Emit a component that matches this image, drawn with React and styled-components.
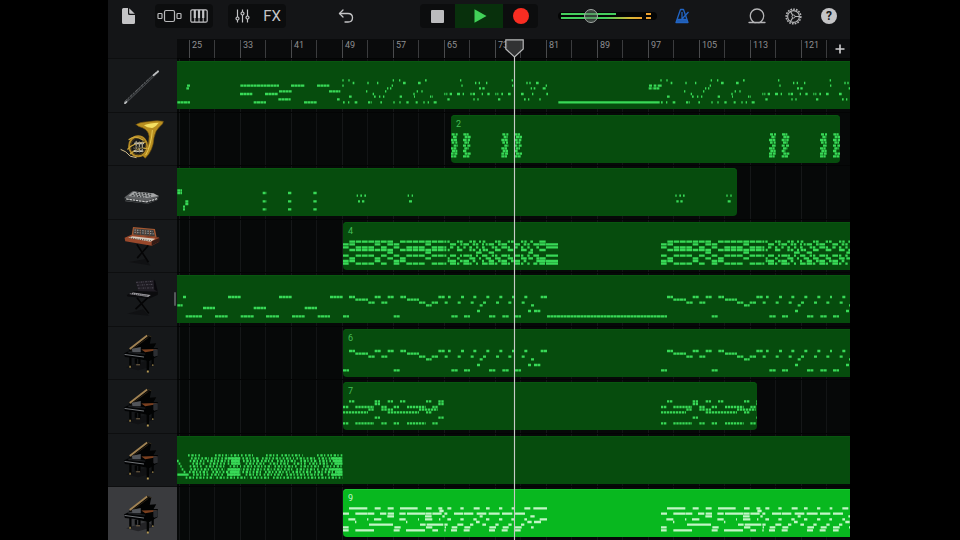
import styled, { createGlobalStyle, css } from 'styled-components'
import { useState } from 'react'


const GlobalStyle = createGlobalStyle`
    * {
        box-sizing: border-box;
    }

    body {
        margin: 0;
        background-color: #000;
        font-family: Roboto, 'Liberation Sans', sans-serif;
    }

    button {
        border: 0;
        margin: 0;
        padding: 0;
        background: none;
        color: inherit;
        font: inherit;
        cursor: pointer;
    }

    svg {
        display: block;
    }
`

const Screen = styled.div`
    display: flex;
    flex-direction: column;
    min-height: 100vh;
    margin: 0 110px 0 108px;
    background-color: #141517;
    color: #c4c4c6;
`

const Toolbar = styled.header`
    display: grid;
    grid-template-columns: 1fr auto 1fr;
    align-items: center;
    height: 39px;
    padding-bottom: 7px;
`

const ToolbarLeft = styled.div`
    display: flex;
    align-items: center;
    gap: 15px;
    padding: 0 66px 0 13px;

    > :first-child {
        margin-right: 4px;
    }

    > :last-child {
        margin-left: auto;
    }
`

const ToolbarRight = styled.div`
    display: flex;
    align-items: center;
    gap: 18px;
    padding: 0 13px 0 20px;
`

const RightButtons = styled.div`
    display: flex;
    gap: 19px;
    margin-left: auto;
`

const IconButton = styled.button`
    display: grid;
    place-items: center;
    height: 24px;
`

const ButtonGroup = styled.div`
    display: flex;
    height: 24px;
    border-radius: 4px;
    background-color: #0c0d0e;
    overflow: hidden;
`

const GroupButton = styled.button`
    display: grid;
    place-items: center;
    width: ${props => props.$wide ? '48px' : props.$medium ? '35px' : '29px'};
    background-color: ${props => props.$playing ? '#08300c' : 'transparent'};
    font-size: 15px;
    line-height: 24px;

    & + & {
        border-left: 1px solid ${props => props.$medium || props.$wide ? 'transparent' : '#17181a'};
    }
`

const VolumeBox = styled.div`
    display: grid;
    width: 99px;
    height: 16px;

    > * {
        grid-area: 1 / 1;
    }
`

const VolumeSlider = styled.input`
    appearance: none;
    width: 100%;
    height: 16px;
    margin: 0;
    background: transparent;

    &::-webkit-slider-thumb {
        appearance: none;
        width: 14px;
        height: 14px;
        border: 1px solid #a2a8a4;
        border-radius: 50%;
        background-color: rgba(100, 120, 105, 0.5);
    }
`

const HelpMark = styled.span`
    width: 16px;
    height: 16px;
    border-radius: 50%;
    background-color: #c4c4c6;
    color: #17181a;
    font-size: 12px;
    font-weight: 700;
    line-height: 16px;
    text-align: center;
`

const Ruler = styled.div`
    display: flex;
    height: 19px;
    margin-left: 69px;
    background-color: #0a0b0c;
`

const Bars = styled.div`
    flex: 1;
    display: flex;
    width: 0;
    padding-left: 12px;
    overflow: hidden;
`

const Bar = styled.div`
    flex: 0 0 51px;
    height: 18px;
    margin-top: 1px;
    padding-left: 3px;
    font-size: 9px;
    line-height: 10px;
    color: #8e8f91;
    background: linear-gradient(#4a4b4d, #4a4b4d) 0 0 / 1px 100% no-repeat,
        linear-gradient(#3b3c3e, #3b3c3e) 25px 0 / 1px 100% no-repeat;
`

const AddButton = styled.button`
    display: grid;
    place-items: center;
    width: 21px;
    background-color: #0c0d0f;
`

const Tracks = styled.main`
    position: relative;
    flex: 1;
    display: grid;
    grid-template-rows: repeat(9, minmax(53px, 1fr));
`

const TrackRow = styled.div`
    display: flex;
`

const TrackHeader = styled.button`
    flex: 0 0 69px;
    display: grid;
    align-items: center;
    border-top: 1px solid #0d0e0f;
    background-color: ${props => props.$selected ? '#3a3b3e' : '#16181a'};

    svg {
        width: 69px;
        height: 52px;
    }
`

const Lane = styled.div`
    flex: 1;
    display: flex;
    width: 0;
    padding-top: 2px;
    overflow: hidden;
    border-top: 1px solid #030404;
    background: repeating-linear-gradient(90deg, #151718 0 1px, transparent 1px 25px, #121415 25px 26px, transparent 26px 51px) 12px 0,
        #060808;
`

const Region = styled.div`
    display: grid;
    flex: 0 0 auto;
    width: ${props => props.$width}px;
    height: 48px;
    margin-left: ${props => props.$start}px;
    border-radius: ${props => props.$start > 0 ? '4px' : 0} ${props => props.$open ? 0 : '4px'} ${props => props.$open ? 0 : '4px'} ${props => props.$start > 0 ? '4px' : 0};
    overflow: hidden;
    background-color: #064c0d;
    box-shadow: inset 0 1px #08560f;
    color: #46bd57;

    ${props => props.$selected && css`
        background-color: #08b81f;
        box-shadow: inset 0 1px #1cc534;
        color: #c4f5c9;
    `}

    > * {
        grid-area: 1 / 1;
    }
`

const RegionName = styled.span`
    padding: 4px 5px;
    font-size: 9px;
    line-height: 10px;
`

const Playhead = styled.div`
    position: absolute;
    top: -19px;
    bottom: 0;
    left: 397px;
    width: 19px;
    pointer-events: none;

    &::after {
        content: '';
        position: absolute;
        top: 18px;
        bottom: 0;
        left: 9px;
        width: 1px;
        background-color: #c6cac6;
        box-shadow: 0 0 1px #8f9990;
    }
`

const ResizeHandle = styled.div`
    position: absolute;
    top: 234px;
    left: 66px;
    width: 2px;
    height: 14px;
    border-radius: 1px;
    background-color: #55575a;
`


// Notes are kept as { height in the region: [start, length, start, length...] },
// in thirds of a pixel from the left edge of the timeline.
const SECOND_VERSE = 954
const VERSE = 498

const move = (notes, offset) => Object.fromEntries(
    Object.entries(notes).map(([y, list]) => [y, list.map((n, i) => i % 2 === 0 ? n + offset : n)])
)

const twice = (notes) => [move(notes, VERSE), move(notes, VERSE + SECOND_VERSE)]

const bassoonIntro = {
    74: [30, 9, 190, 116, 342, 41, 420, 37, 1416, 10, 1430, 8, 1442, 12],
    82: [28, 8, 1415, 11, 1429, 18],
    91: [306, 38, 456, 34],
    99: [189, 37, 264, 38],
    115: [304, 37, 480, 8],
    124: [1, 38, 230, 37, 381, 38],
}

const bassoonVerse = {
    58: [-2, 4, 16, 4, 149, 4, 168, 4, 246, 5, 351, 4, 506, 4],
    66: [29, 5, 73, 4, 102, 4, 180, 8, 225, 8, 396, 4, 407, 4, 429, 4, 550, 4, 559, 4, 579, 8],
    74: [-2, 4, 146, 4, 355, 4, 507, 4, 608, 4],
    82: [132, 4, 141, 4, 408, 6, 418, 7, 563, 4, 572, 5, 599, 9],
    91: [69, 4, 126, 4, 221, 4, 235, 4],
    99: [89, 4, 211, 4, 304, 3, 310, 3, 320, 7, 342, 9, 359, 4, 382, 4, 389, 7, 416, 4, 433, 7, 457, 3, 463, 3, 475, 5, 495, 8, 534, 8, 567, 4, 610, 5],
    107: [18, 8, 93, 5, 108, 4, 120, 4, 170, 7, 213, 3, 261, 3, 266, 3],
    115: [313, 7, 391, 4, 403, 4, 465, 7, 543, 5, 555, 4, 589, 4],
    124: [0, 5, 15, 4, 35, 8, 75, 6, 83, 3, 112, 5, 151, 4, 169, 4, 190, 7, 218, 6, 241, 4, 254, 4, 272, 10],
}

const hornA = { 58: [3, 10, 15, 6], 66: [7, 12], 75: [0, 20], 83: [3, 8, 14, 6], 92: [9, 12], 100: [0, 17], 108: [4, 16], 116: [0, 9, 11, 9], 124: [0, 17] }
const hornB = { 58: [1, 16], 66: [5, 18], 75: [0, 12, 14, 7], 83: [4, 14], 92: [0, 9, 13, 9], 100: [4, 13], 108: [0, 11], 116: [5, 18], 124: [0, 20] }

const padNotes = {
    67: [1, 14],
    75: [1, 14, 257, 11, 333, 11, 409, 11],
    83: [539, 4, 550, 5, 562, 5, 692, 4, 704, 4, 1495, 4, 1507, 5, 1518, 5, 1648, 4, 1660, 4],
    100: [25, 10, 257, 11, 333, 11, 409, 11, 543, 6, 555, 7, 696, 10, 1498, 7, 1510, 7, 1652, 10],
    108: [25, 9],
    116: [18, 6],
    124: [18, 6, 257, 11, 333, 11, 409, 11],
}

// the slow half of the chords plays whole bars, the fast half shorter steps
const chordBars = {
    59: [1, 2, 3, 4, 5, 6, 7, 9, 10, 11, 12, 13, 14, 15],
    67: [0, 1, 5, 7, 8, 13],
    76: [0, 2, 3, 4, 6, 8, 10, 11, 12, 14, 15],
    84: [1, 2, 3, 4, 5, 6, 7, 9, 10, 11, 12, 13, 14, 15],
    92: [7, 13],
    101: [0, 2, 3, 4, 6, 8, 10, 11, 12, 14, 15],
    109: [1, 5, 7, 9, 13],
    117: [0, 1, 5, 8, 9],
    125: [0, 2, 3, 4, 6, 8, 10, 11, 12, 14, 15],
}

const chordFast = {
    59: [133, 6, 142, 7, 171, 7, 180, 8, 208, 8, 219, 8, 237, 6, 248, 8, 285, 7, 294, 8, 323, 7, 333, 8, 363, 7, 373, 7, 391, 8, 418, 19],
    67: [150, 18, 181, 6, 190, 17, 218, 8, 228, 7, 246, 6, 257, 6, 266, 16, 294, 8, 304, 17, 343, 17, 371, 8, 382, 7, 400, 17, 418, 19, 438, 36],
    76: [133, 6, 150, 10, 171, 7, 190, 7, 208, 8, 228, 7, 246, 8, 275, 8, 285, 7, 304, 17, 323, 7, 343, 10, 363, 7, 382, 7, 409, 8, 438, 36],
    84: [133, 6, 143, 6, 171, 16, 208, 7, 218, 8, 237, 6, 248, 8, 257, 7, 285, 17, 323, 17, 363, 17, 391, 8, 418, 19],
    92: [228, 17, 266, 16, 385, 14],
    101: [133, 6, 150, 18, 180, 6, 190, 17, 208, 8, 228, 6, 246, 16, 275, 7, 285, 7, 304, 17, 323, 7, 343, 17, 363, 7, 382, 7, 400, 17, 438, 36],
    109: [143, 6, 171, 8, 208, 18, 237, 6, 257, 16, 285, 17, 323, 16, 363, 17, 385, 14, 409, 8, 418, 19],
    117: [143, 6, 150, 18, 180, 8, 190, 17, 218, 8, 246, 6, 266, 16, 294, 8, 304, 17, 333, 8, 343, 17, 371, 8, 409, 28, 438, 36],
    125: [133, 6, 150, 18, 171, 7, 190, 17, 208, 7, 228, 6, 246, 17, 266, 17, 285, 7, 304, 17, 323, 7, 343, 17, 363, 7, 382, 7, 400, 12, 418, 17, 438, 36],
}

const chordSlow = Object.fromEntries(
    Object.entries(chordBars).map(([y, bars]) => [y, bars.flatMap(bar => [bar * 19, 17])])
)

const leadIntro = {
    66: [18, 10, 153, 38, 306, 38, 459, 38],
    91: [1, 16],
    99: [78, 36, 230, 37, 383, 37],
    124: [26, 50, 114, 38, 191, 40, 267, 39, 345, 38, 422, 37, 1110, 345],
}

const leadVerse = {
    66: [18, 18, 95, 18, 134, 18, 172, 17, 286, 19, 315, 8, 354, 9, 391, 9, 430, 9, 469, 9, 507, 6, 544, 10, 593, 19],
    74: [37, 38, 192, 36],
    83: [76, 19, 115, 18, 228, 19, 266, 20, 305, 10, 344, 9, 383, 9, 420, 9, 459, 9, 496, 10, 536, 9],
    91: [249, 17, 410, 9, 564, 9],
    108: [402, 9, 555, 9, 573, 19],
    124: [0, 18, 152, 18, 325, 19, 363, 18, 438, 19, 478, 19, 516, 18],
}

const pianoVerse = {
    58: [18, 17, 95, 17, 134, 17, 171, 17, 249, 17, 286, 16],
    66: [95, 17, 286, 16],
    75: [0, 17, 37, 56, 115, 16, 152, 17, 192, 56, 268, 16],
    83: [76, 17, 115, 17, 134, 17, 228, 56],
    91: [0, 75, 134, 94, 249, 17],
    107: [95, 18, 286, 16],
    124: [0, 17, 37, 56, 115, 16, 152, 17, 192, 56, 268, 17],
}

const arpeggio = {
    58: [33, 38, 114, 42, 161, 36, 204, 24, 267, 36, 313, 64, 420, 36, 460, 37],
    67: [42, 54, 102, 90, 196, 52, 255, 96, 358, 60, 424, 72],
    75: [0, 5, 38, 44, 90, 100, 198, 50, 252, 40, 300, 60, 370, 50, 426, 70],
    83: [5, 5, 46, 36, 98, 46, 152, 40, 206, 60, 278, 60, 350, 36, 396, 56, 462, 34],
    91: [10, 4, 38, 40, 86, 62, 158, 34, 200, 84, 292, 70, 370, 60, 438, 58],
    100: [14, 5, 40, 104, 152, 42, 198, 86, 290, 62, 358, 70, 434, 62],
    108: [20, 5, 36, 60, 106, 84, 196, 60, 264, 74, 346, 60, 412, 84],
    116: [48, 46, 102, 36, 150, 42, 206, 46, 260, 60, 328, 56, 390, 48, 452, 44],
    125: [26, 84, 118, 94, 220, 58, 288, 98, 392, 104],
}

const arpeggioStabs = {
    67: [152, 38, 462, 34],
    75: [164, 24, 474, 22],
    83: [166, 24, 474, 22],
    100: [152, 38, 458, 38],
    108: [160, 28, 478, 18],
    116: [1, 34, 150, 40, 466, 30],
}

const grandVerse = {
    58: [18, 55, 95, 18, 134, 18, 171, 53, 249, 17, 286, 12, 313, 12, 352, 10, 392, 18, 429, 11, 468, 10, 506, 8, 544, 18, 571, 41],
    66: [289, 13],
    74: [0, 18, 37, 37, 75, 19, 111, 19, 134, 19, 169, 19, 192, 56, 249, 17, 268, 28, 304, 9, 333, 28, 363, 28, 401, 29, 437, 33, 477, 31, 516, 30],
    82: [133, 20, 246, 20, 298, 7, 410, 9, 562, 13],
    91: [16, 21, 72, 4, 93, 22, 169, 19, 225, 3, 246, 22, 288, 4, 313, 11, 352, 10, 391, 10, 429, 10, 468, 10, 505, 8, 544, 8, 590, 22],
    99: [36, 4, 189, 4, 399, 11, 553, 13, 573, 21],
    107: [78, 72, 231, 17, 251, 50, 304, 10, 343, 18, 381, 10, 418, 11, 457, 10, 496, 10, 534, 10],
    115: [0, 17, 154, 19, 249, 19, 305, 4, 326, 17, 364, 18, 439, 20, 479, 18, 516, 20, 564, 8],
    124: [0, 17, 37, 56, 152, 18, 189, 57, 268, 17, 304, 4, 324, 18, 362, 18, 438, 18, 476, 18, 516, 17],
}

const tracks = [
    {
        id: 1, instrument: 'Bassoon', start: 0, end: 2100,
        notes: [bassoonIntro, ...twice(bassoonVerse)], held: { 124: [1144, 304] },
    },
    {
        id: 2, instrument: 'French Horn', start: 822, end: 1989, label: true,
        notes: [821, 973, 1776, 1929].map(x => move(hornA, x)).concat([858, 1012, 1814, 1968].map(x => move(hornB, x))),
    },
    { id: 3, instrument: 'Pad Synth', start: 0, end: 1680, notes: [padNotes] },
    {
        id: 4, instrument: 'Modular Synth', start: 498, end: 2100, label: true, solid: true,
        notes: [...twice(chordSlow), ...twice(move(chordFast, 171))],
    },
    { id: 5, instrument: 'Lead Synth', start: 0, end: 2100, notes: [leadIntro, ...twice(leadVerse)] },
    { id: 6, instrument: 'Grand Piano', start: 498, end: 2100, label: true, notes: twice(leadVerse) },
    { id: 7, instrument: 'Grand Piano', start: 498, end: 1740, label: true, notes: twice(pianoVerse), dash: '7 2' },
    { id: 8, instrument: 'Grand Piano', start: 0, end: 2100, notes: [arpeggio], dash: '5 5 7 4 4 6', held: arpeggioStabs },
    { id: 9, instrument: 'Grand Piano', start: 498, end: 2100, label: true, solid: true, notes: twice(grandVerse) },
]

const toPath = (notes) => Object.entries(notes).map(([y, list]) => {
    let d = ''
    for (let i = 0; i < list.length; i += 2) {
        d += `M${list[i]} ${y}h${list[i + 1]}`
    }
    return d
}).join('')

const Notes = ({ track, selected }) => {
    const width = track.end - track.start
    const color = selected ? '#c2f5c6' : '#38d957'
    return (
        <svg width={width / 3} height='48' viewBox={`${track.start} 0 ${width} 144`} fill='none' stroke={color} strokeWidth='7'>
            <path d={track.notes.map(toPath).join('')} strokeDasharray={track.solid ? undefined : track.dash || '9 1'} />
            {track.held && <path d={toPath(track.held)} />}
        </svg>
    )
}


const Bassoon = () => (
    <g fill='none' strokeLinecap='round'>
        <path d='M50 136L152 39' stroke='#4a4d50' strokeWidth='6' />
        <path d='M48 132L150 36' stroke='#8d9092' strokeWidth='2' strokeDasharray='9 5 3 6' />
        <path d='M62 124L138 52' stroke='#1b1d1f' strokeWidth='3' strokeDasharray='7 5' />
        <path d='M138 50L152 38M49 137l5-4' stroke='#bfc1c2' strokeWidth='5' />
    </g>
)

const FrenchHorn = () => (
    <g fill='none' strokeLinecap='round'>
        <path d='M84 36Q90 29 120 27Q150 22 168 26Q168 33 158 41Q143 53 139 77Q136 118 112 140L104 132Q124 112 124 72Q122 54 104 46Q90 42 84 36Z' fill='#b98f20' stroke='#7b5a10' strokeWidth='2' />
        <path d='M108 38Q126 31 154 30Q146 41 136 46Q118 47 108 38Z' fill='#f3df62' />
        <path d='M134 54Q131 98 114 129' stroke='#e7c955' strokeWidth='3' />
        <ellipse cx='90' cy='103' rx='28' ry='31' stroke='#b58b25' strokeWidth='6' />
        <ellipse cx='90' cy='103' rx='23' ry='26' stroke='#6e5316' strokeWidth='2' />
        <path d='M62 82Q80 66 106 84M58 112Q74 92 112 90M66 126Q92 104 118 110' stroke='#cda63a' strokeWidth='4' />
        <path d='M80 94h26M78 118h26' stroke='#c7c3b5' strokeWidth='5' />
        <path d='M84 88v32M94 90v30M103 90v28' stroke='#a59c80' strokeWidth='4' />
        <path d='M82 103l22 7M76 108l14 8' stroke='#55523f' strokeWidth='4' />
        <path d='M37 113Q52 117 66 134L84 138' stroke='#d8c391' strokeWidth='3' />
    </g>
)

const PadSynth = () => (
    <g>
        <path d='M48 97L72 78L154 92L150 105L120 117L50 109Z' fill='#5d5f61' />
        <path d='M76 79L138 84L153 93L116 99L60 93Z' fill='#a4a6a7' />
        <path d='M50 99L117 108L153 96V103L118 117L49 107Z' fill='#232628' />
        <path d='M53 102L116 111L149 101' fill='none' stroke='#c9caca' strokeWidth='4' strokeDasharray='8 2' />
        <path d='M77 86l52 8M85 82l48 6M70 91l42 6' stroke='#3c3f41' strokeWidth='4' strokeDasharray='6 4' />
    </g>
)

const ModularSynth = () => (
    <g>
        <path d='M62 130L128 141L112 121Z' fill='#101113' />
        <path d='M86 75L122 131M122 78L87 118' stroke='#050506' strokeWidth='5' />
        <path d='M74 22L142 28L147 53L70 47Z' fill='#a45831' />
        <path d='M77 26L138 31L142 50L75 45Z' fill='#3d3d3d' />
        <path d='M79 31l57 5M79 38l59 5' stroke='#9b9b98' strokeWidth='4' strokeDasharray='4 4' />
        <path d='M84 28v18M97 29v18M111 30v18M125 31v18' stroke='#7b4a31' strokeWidth='2' />
        <path d='M48 55L70 46L155 54V67L132 80L50 66Z' fill='#99482b' />
        <path d='M59 55L72 50L143 58L129 67Z' fill='#d7cabc' />
        <path d='M64 56l65 8' stroke='#544c46' strokeWidth='4' strokeDasharray='3 4' />
        <path d='M132 66l23-10v11l-23 13Z' fill='#351b15' />
    </g>
)

const LeadSynth = () => (
    <g>
        <path d='M56 126L124 132L105 112Z' fill='#101113' />
        <path d='M86 76L123 125M120 76L82 112' stroke='#040405' strokeWidth='5' />
        <path d='M82 26L139 21L151 58L91 59Z' fill='#1f1c23' />
        <path d='M84 29l51-3M87 38l50-3M90 47l50-1' stroke='#6d6975' strokeWidth='2' strokeDasharray='5 3 2 4' />
        <path d='M138 21l5 4 8 33-11-6Z' fill='#0a090d' />
        <path d='M55 68L78 56L151 58V67L125 79L57 73Z' fill='#0b0b0d' />
        <path d='M62 65L74 60L129 68L121 74Z' fill='#a09fa3' />
        <path d='M68 64l53 7' stroke='#38363b' strokeWidth='4' strokeDasharray='3 3' />
    </g>
)

const GrandPiano = () => (
    <g>
        <path d='M53 125L90 134L138 121L119 104Z' fill='#0b0c0d' opacity='.5' />
        <path d='M60 74L118 24L131 29L126 52L146 50L135 70L92 72Z' fill='#020303' />
        <path d='M64 68L118 26' stroke='#a08253' strokeWidth='6' />
        <path d='M68 72L122 32' stroke='#2b2114' strokeWidth='3' />
        <path d='M119 26l12 4' stroke='#51442d' strokeWidth='2' />
        <path d='M74 76L102 66L151 65V90L124 106L78 96Z' fill='#020303' />
        <path d='M100 70L147 68V72L112 78Z' fill='#7a3f1e' />
        <path d='M137 69h14v20l-14 4Z' fill='#2c2e32' />
        <path d='M70 67L98 62V78L73 80Z' fill='#515459' />
        <path d='M46 82L58 76L113 83V99L49 93Z' fill='#020304' />
        <path d='M48 85L108 93' stroke='#75787c' strokeWidth='3' />
        <path d='M60 79L112 84' stroke='#303338' strokeWidth='2' />
        <path d='M66 93v30M120 99v38M135 90v28M83 98v16M94 98v18' stroke='#020303' strokeWidth='7' />
        <path d='M117 138h6M63 123h4M134 118h3' stroke='#b79b55' strokeWidth='6' />
        <path d='M84 117h12' stroke='#7c684b' strokeWidth='3' />
    </g>
)

const pictures = {
    'Bassoon': Bassoon,
    'French Horn': FrenchHorn,
    'Pad Synth': PadSynth,
    'Modular Synth': ModularSynth,
    'Lead Synth': LeadSynth,
    'Grand Piano': GrandPiano,
}

const barNumbers = [25, 33, 41, 49, 57, 65, 73, 81, 89, 97, 105, 113, 121]


const App = () => {

    const [playing, setPlaying] = useState(true)
    const [volume, setVolume] = useState(31)
    const [selected, setSelected] = useState(9)

    return (
        <Screen>
            <GlobalStyle />
            <Toolbar>
                <ToolbarLeft>
                    <IconButton aria-label='My Songs'>
                        <svg width='15' height='18' viewBox='0 0 15 18' fill='#c4c4c6'>
                            <path d='M2.5 1H7v5.5Q7 8 8.5 8H14v7.500q0 1.500-1.500 1.500h-10Q1 17 1 15.500v-13Q1 1 2.500 1Z' />
                            <path d='M8.200 1.200L13.800 6.800H9Q8.200 6.800 8.200 6Z' />
                        </svg>
                    </IconButton>
                    <ButtonGroup>
                        <GroupButton aria-label='Browser'>
                            <svg width='25' height='14' viewBox='0 0 25 14' fill='none' stroke='#b9b9bb' strokeWidth='1.200'>
                                <rect x='1' y='4.500' width='4' height='5' rx='.8' />
                                <rect x='7.500' y='1.500' width='10' height='11' rx='1.500' />
                                <rect x='20' y='4.500' width='4' height='5' rx='.8' />
                            </svg>
                        </GroupButton>
                        <GroupButton aria-label='Instrument'>
                            <svg width='18' height='14' viewBox='0 0 18 14' fill='none' stroke='#c4c4c6' strokeWidth='1.200'>
                                <rect x='.8' y='.8' width='16.400' height='12.400' rx='1.500' />
                                <path d='M4.800 8v5M9 8v5M13.200 8v5' strokeWidth='1' />
                                <path d='M4.800 1v8M9 1v8M13.200 1v8' strokeWidth='2.200' />
                            </svg>
                        </GroupButton>
                    </ButtonGroup>
                    <ButtonGroup>
                        <GroupButton aria-label='Track Controls'>
                            <svg width='15' height='14' viewBox='0 0 15 14' fill='#0c0d0e' stroke='#c4c4c6' strokeWidth='1.200'>
                                <path d='M2.500 .5v13M7.500 .5v13M12.500 .5v13' />
                                <circle cx='2.500' cy='9.500' r='1.500' />
                                <circle cx='7.500' cy='4.500' r='1.500' />
                                <circle cx='12.500' cy='8.500' r='1.500' />
                            </svg>
                        </GroupButton>
                        <GroupButton>FX</GroupButton>
                    </ButtonGroup>
                    <IconButton aria-label='Undo'>
                        <svg width='16' height='14' viewBox='0 0 16 14' fill='none' stroke='#c4c4c6' strokeWidth='1.300' strokeLinecap='round' strokeLinejoin='round'>
                            <path d='M5 1L1.500 4.500L5 8' />
                            <path d='M1.500 4.500H10Q14.500 4.500 14.500 8.700T10 13H7' />
                        </svg>
                    </IconButton>
                </ToolbarLeft>

                <ButtonGroup>
                    <GroupButton $medium aria-label='Stop'>
                        <svg width='13' height='13'><rect width='13' height='13' rx='1' fill='#bcbcbe' /></svg>
                    </GroupButton>
                    <GroupButton $wide $playing={playing} aria-label='Play' onClick={() => setPlaying(!playing)}>
                        <svg width='14' height='14' viewBox='0 0 14 14'><path d='M1.500 .3L13.500 7L1.500 13.700Z' fill='#41d158' /></svg>
                    </GroupButton>
                    <GroupButton $medium aria-label='Record'>
                        <svg width='16' height='16'><circle cx='8' cy='8' r='8' fill='#f92d22' /></svg>
                    </GroupButton>
                </ButtonGroup>

                <ToolbarRight>
                    <VolumeBox>
                        <svg width='99' height='16' viewBox='0 0 99 16'>
                            <defs>
                                <linearGradient id='level' x1='0' x2='1'>
                                    <stop offset='.55' stopColor='#45ce5d' />
                                    <stop offset='.85' stopColor='#d8ba38' />
                                    <stop offset='1' stopColor='#eda130' />
                                </linearGradient>
                            </defs>
                            <rect y='4' width='99' height='8' rx='4' fill='#040505' />
                            <rect x='3' y='5' width='55' height='2' fill='#45ce5d' />
                            <rect x='3' y='9' width='81' height='2' fill='url(#level)' />
                            <path d='M88 6h5M88 10h5' stroke='#eda130' strokeWidth='2' />
                        </svg>
                        <VolumeSlider
                            type='range'
                            aria-label='Master Volume'
                            value={volume}
                            onChange={(e) => setVolume(Number(e.target.value))}
                        />
                    </VolumeBox>
                    <IconButton aria-label='Metronome'>
                        <svg width='15' height='16' viewBox='0 0 15 16' fill='none' stroke='#2265c4' strokeWidth='1.300' strokeLinejoin='round'>
                            <path d='M5.500 1.500H8.500L13 14.500H1Z' />
                            <path d='M2 11.500H12M7 11L13.500 4M7 4v7' />
                            <path d='M1.500 13H12.500' strokeWidth='1.800' />
                        </svg>
                    </IconButton>
                    <RightButtons>
                        <IconButton aria-label='Loops'>
                            <svg width='18' height='16' viewBox='0 0 18 16' fill='none' stroke='#b4b4b6' strokeWidth='1.300' strokeLinecap='round'>
                                <path d='M1 14.500H6.500Q2.300 12 2.300 7.700A6.700 6.700 0 0 1 15.700 7.700Q15.700 12 11.500 14.500H17' />
                                <path d='M6.500 14.500h5' />
                            </svg>
                        </IconButton>
                        <IconButton aria-label='Settings'>
                            <svg width='17' height='17' viewBox='0 0 17 17' fill='none' stroke='#b4b4b6'>
                                <circle cx='8.500' cy='8.500' r='7.300' strokeWidth='1.600' strokeDasharray='1.700 1.122' />
                                <circle cx='8.500' cy='8.500' r='5.900' strokeWidth='1.200' />
                                <circle cx='8.500' cy='8.500' r='1.500' />
                                <path d='M10 8.500h4.500M7.700 7.200L5.500 3.500M7.700 9.800L5.500 13.500' strokeWidth='1.200' />
                            </svg>
                        </IconButton>
                        <IconButton aria-label='Help'>
                            <HelpMark>?</HelpMark>
                        </IconButton>
                    </RightButtons>
                </ToolbarRight>
            </Toolbar>

            <Ruler>
                <Bars>
                    {barNumbers.map(number => <Bar key={number}>{number}</Bar>)}
                </Bars>
                <AddButton aria-label='Song Sections'>
                    <svg width='10' height='10' viewBox='0 0 10 10' stroke='#d0d0d2' strokeWidth='1.600'><path d='M5 .5v9M.5 5h9' /></svg>
                </AddButton>
            </Ruler>

            <Tracks>
                {tracks.map(track => {
                    const Picture = pictures[track.instrument]
                    const isSelected = selected === track.id
                    return (
                        <TrackRow key={track.id}>
                            <TrackHeader aria-label={track.instrument} $selected={isSelected} onClick={() => setSelected(track.id)}>
                                <svg viewBox='0 0 207 161'><Picture /></svg>
                            </TrackHeader>
                            <Lane>
                                <Region
                                    $start={track.start / 3}
                                    $width={(track.end - track.start) / 3}
                                    $open={track.end === 2100}
                                    $selected={isSelected}
                                >
                                    <Notes track={track} selected={isSelected} />
                                    {track.label && <RegionName>{track.id}</RegionName>}
                                </Region>
                            </Lane>
                        </TrackRow>
                    )
                })}
                <ResizeHandle />
                <Playhead>
                    <svg width='19' height='19' viewBox='0 0 19 19'>
                        <path d='M.8 .8H18.200V10L9.500 18L.8 10Z' fill='#38393b' fillOpacity='.85' stroke='#b9babb' strokeWidth='1.200' />
                    </svg>
                </Playhead>
            </Tracks>
        </Screen>
    )
}


export default App
